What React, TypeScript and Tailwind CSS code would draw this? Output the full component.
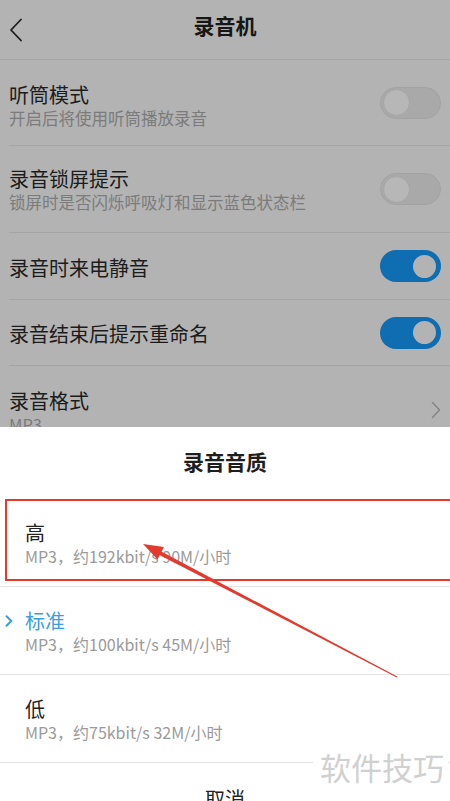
import React from 'react';

const font = { fontFamily: '"Noto Sans CJK SC", "Noto Sans", sans-serif' };

const Toggle = ({ on }: { on: boolean }) => {
  if (on) {
    return (
      <div className="w-[61px] h-[32px] rounded-full bg-[#0f6db1] flex items-center justify-end pr-[2px] shrink-0">
        <div className="w-[29px] h-[29px] rounded-full bg-[#b3b3b3] border-[3px] border-[#0f6db1]" />
      </div>
    );
  }
  return (
    <div className="w-[61px] h-[32px] rounded-full bg-[#a9a9a9] border border-[#a3a3a3] flex items-center pl-[2px] shrink-0">
      <div className="w-[27px] h-[27px] rounded-full bg-[#b7b7b7] border border-[#a6a6a6]" />
    </div>
  );
};

const SettingRow = ({
  title,
  sub,
  on,
  h,
  shift,
}: {
  title: string;
  sub?: string;
  on: boolean;
  h: string;
  shift: string;
}) => (
  <div className={`ml-[9px] pr-[9px] border-b border-[#a4a4a4] flex items-center justify-between ${h}`}>
    <div className={shift}>
      <div className="text-[20px] leading-[24px] text-[#1c1c1c]">{title}</div>
      {sub && <div className="text-[16.5px] leading-[22px] text-[#7b7b7b]">{sub}</div>}
    </div>
    <Toggle on={on} />
  </div>
);

const QualityItem = ({
  title,
  sub,
  selected,
}: {
  title: string;
  sub: string;
  selected?: boolean;
}) => (
  <div className="h-[88px] pl-[5px] pt-[22px] border-b border-[#e3e3e3]">
    <div className="flex items-center h-[24px]">
      <div className="w-[20px] flex items-center">
        {selected && (
          <svg width="8" height="12" viewBox="0 0 8 12" fill="none">
            <path d="M1.5 1.2L6.3 6L1.5 10.8" stroke="#3a9fdc" strokeWidth="2" strokeLinecap="round" strokeLinejoin="round" />
          </svg>
        )}
      </div>
      <div className={`text-[20px] leading-[24px] ${selected ? 'text-[#3a9fdc]' : 'text-[#222]'}`}>{title}</div>
    </div>
    <div className="pl-[20px] text-[16px] leading-[22px] text-[#9a9a9a]">{sub}</div>
  </div>
);

export default function App() {
  return (
    <div className="relative w-[450px] h-[801px] overflow-hidden bg-white" style={font}>
      {/* dimmed settings page */}
      <div className="h-[427px] overflow-hidden bg-[#b3b3b3]">
        <div className="h-[60px] border-b border-[#a4a4a4] grid grid-cols-[60px_1fr_60px] items-center">
          <div className="pl-[9px] flex items-center">
            <svg width="14" height="24" viewBox="0 0 14 24" fill="none">
              <path d="M12 1.5L2 12L12 22.5" stroke="#1c1c1c" strokeWidth="1.8" strokeLinecap="round" strokeLinejoin="round" />
            </svg>
          </div>
          <div className="text-center text-[21px] font-semibold text-[#161616] pb-[8px]">录音机</div>
          <div />
        </div>
        <SettingRow title="听筒模式" sub="开启后将使用听筒播放录音" on={false} h="h-[86px]" shift="mt-[6px]" />
        <SettingRow title="录音锁屏提示" sub="锁屏时是否闪烁呼吸灯和显示蓝色状态栏" on={false} h="h-[87px]" shift="mt-[1px]" />
        <SettingRow title="录音时来电静音" on={true} h="h-[67px]" shift="mt-[3px]" />
        <SettingRow title="录音结束后提示重命名" on={true} h="h-[66px]" shift="mt-[3px]" />
        <div className="ml-[9px] pr-[9px] pt-[23px] flex justify-between">
          <div>
            <div className="text-[20px] leading-[24px] text-[#1c1c1c]">录音格式</div>
            <div className="text-[16.5px] leading-[22px] text-[#7b7b7b]">MP3</div>
          </div>
          <div className="pt-[12px]">
            <svg width="10" height="18" viewBox="0 0 10 18" fill="none">
              <path d="M1.5 1.5L8.5 9L1.5 16.5" stroke="#858585" strokeWidth="1.5" strokeLinecap="round" strokeLinejoin="round" />
            </svg>
          </div>
        </div>
      </div>

      {/* bottom sheet */}
      <div className="bg-white">
        <div className="h-[72px] flex items-center justify-center text-[21px] font-semibold text-[#1e1e1e] pb-[3px]">
          录音音质
        </div>
        <div className="relative">
          <div className="absolute left-[5px] top-0 w-[460px] h-[82px] border-2 border-[#e4392d]" />
          <QualityItem title="高" sub="MP3，约192kbit/s 90M/小时" />
        </div>
        <QualityItem title="标准" sub="MP3，约100kbit/s 45M/小时" selected />
        <QualityItem title="低" sub="MP3，约75kbit/s 32M/小时" />
        <div className="pt-[24px] text-center text-[20px] leading-[24px] text-[#222]">取消</div>
      </div>

      {/* annotation arrow */}
      <svg className="absolute left-0 top-0 pointer-events-none" width="450" height="801" viewBox="0 0 450 801">
        <polygon points="143,544 157.5,559.5 163.9,547.1" fill="#e4392d" />
        <polygon points="157.97,554.17 159.83,550.63 397.23,676.56 396.77,677.44" fill="#e4392d" />
      </svg>

      {/* watermark */}
      <div className="absolute left-[313px] top-[748px] bg-white pl-[7px] pr-[4px] text-[31px] leading-[38px] text-[#d0d0d0]">
        软件技巧
      </div>
    </div>
  );
}
